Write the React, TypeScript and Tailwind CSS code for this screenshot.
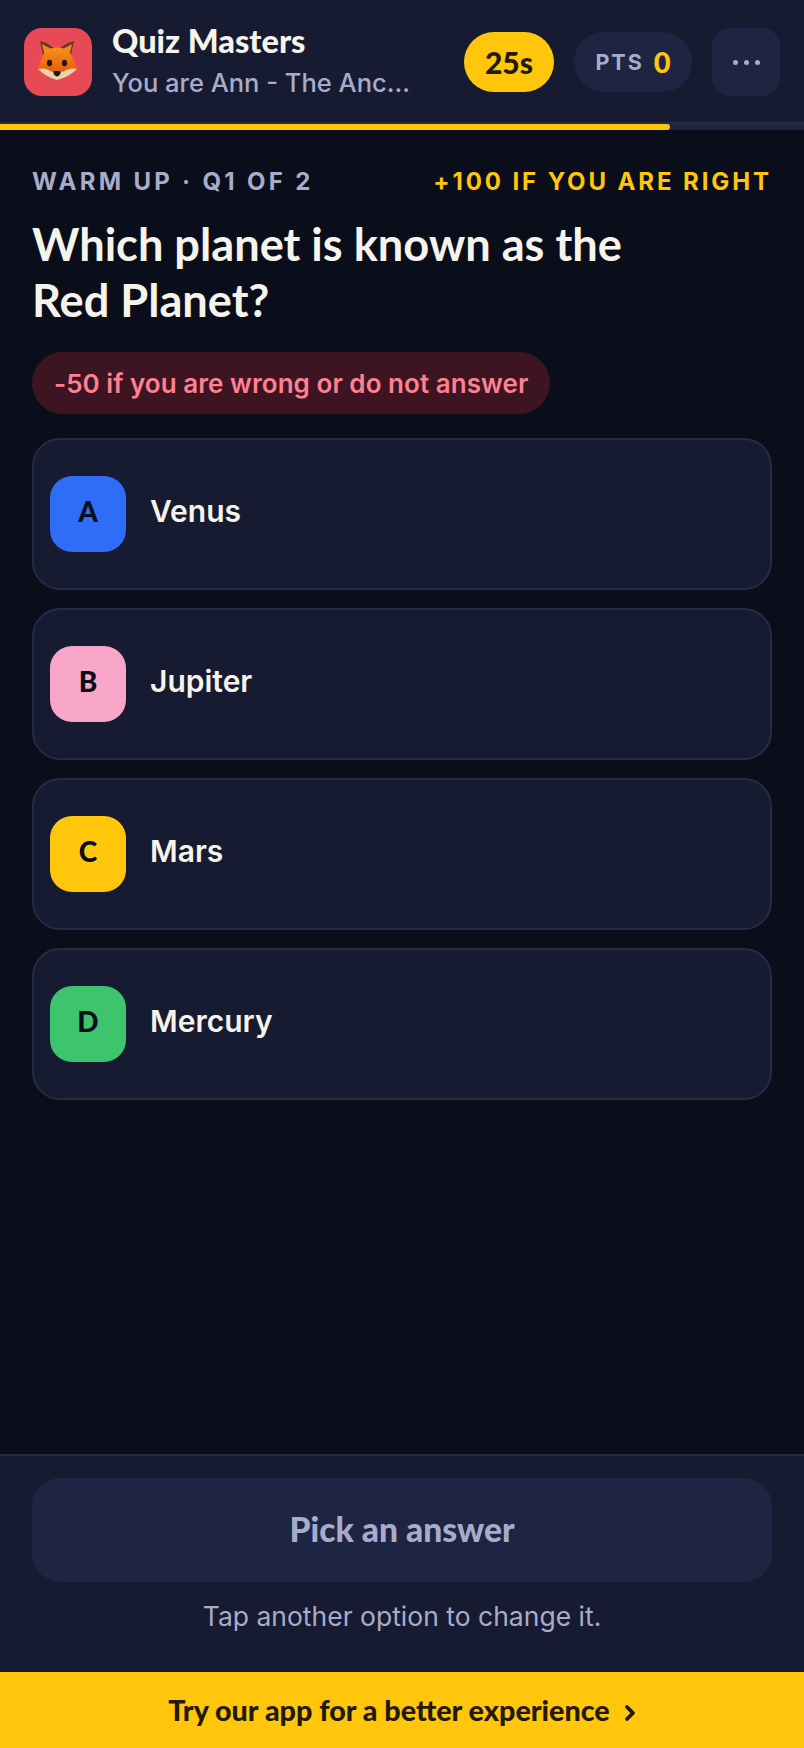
import React from 'react';

const head = { fontFamily: 'Lato, "Noto Sans", sans-serif' };

const options = [
  { letter: 'A', label: 'Venus', color: 'bg-[#2f6df6]' },
  { letter: 'B', label: 'Jupiter', color: 'bg-[#f7a6c8]' },
  { letter: 'C', label: 'Mars', color: 'bg-[#ffc60b]' },
  { letter: 'D', label: 'Mercury', color: 'bg-[#3ec46d]' },
];

const Fox = () => (
  <svg viewBox="0 0 68 68" className="w-[68px] h-[68px]">
    <defs>
      <linearGradient id="fur" x1="0" y1="0" x2="0" y2="1">
        <stop offset="0%" stopColor="#f5901c" />
        <stop offset="60%" stopColor="#ea6a0c" />
        <stop offset="100%" stopColor="#d24f08" />
      </linearGradient>
    </defs>
    <path d="M16 13 L20 31 L31 21 Q24 15 16 13 Z" fill="#5e3a20" />
    <path d="M50 13 L46 31 L35 21 Q42 15 50 13 Z" fill="#5e3a20" />
    <path d="M18 16 L21 29 L29 22 Z" fill="#ef8a1a" />
    <path d="M48 16 L45 29 L37 22 Z" fill="#ef8a1a" />
    <path d="M22 22 Q33 17 44 22 Q50 30 53 41 Q44 50 33 51 Q22 50 14 41 Q17 30 22 22 Z" fill="url(#fur)" />
    <path d="M14 41 Q22 39 28 44 Q33 41 39 44 Q45 39 53 41 Q45 49 33 52 Q22 49 14 41 Z" fill="#e9d3ad" />
    <ellipse cx="25.5" cy="35" rx="2.6" ry="3.2" fill="#231510" />
    <ellipse cx="40.5" cy="35" rx="2.6" ry="3.2" fill="#231510" />
    <path d="M29 43.5 Q33 42 37 43.5 Q36 48 33 48.5 Q30 48 29 43.5 Z" fill="#231510" />
  </svg>
);

export default function App() {
  return (
    <div className="h-[1748px] w-[804px] flex flex-col bg-[#0a0d1a] text-[#f6f3ea]" style={{ fontFamily: 'Inter, sans-serif' }}>
      {/* Top bar */}
      <header className="h-[122px] bg-[#161b31] flex items-center pl-6 pr-6 pt-[2px]">
        <div className="w-[68px] h-[68px] rounded-[18px] bg-[#e84a55] overflow-hidden shrink-0">
          <Fox />
        </div>
        <div className="ml-5 w-[300px] min-w-0">
          <div className="text-[32.5px] leading-[38px] font-black -mt-[2px]" style={head}>Quiz Masters</div>
          <div className="mt-[6px] text-[25.5px] leading-[34px] font-medium text-[#a8acca] truncate">You are Ann - The Anc...</div>
        </div>
        <div className="ml-auto flex items-center">
          <div className="w-[90px] h-[60px] rounded-full bg-[#ffc60b] text-[#241a02] flex items-center justify-center text-[30px] font-black" style={head}>25s</div>
          <div className="ml-5 w-[118px] h-[60px] rounded-full bg-[#1d2542] flex items-center justify-center gap-[10px]">
            <span className="text-[21.5px] font-bold tracking-[2px] text-[#a8acca]">PTS</span>
            <span className="text-[29px] font-black text-[#ffc60b]" style={head}>0</span>
          </div>
          <button className="ml-5 w-[68px] h-[68px] rounded-[18px] bg-[#1d2542] flex items-center justify-center gap-[6px]">
            <span className="w-[5px] h-[5px] rounded-full bg-[#a8acca]" />
            <span className="w-[5px] h-[5px] rounded-full bg-[#a8acca]" />
            <span className="w-[5px] h-[5px] rounded-full bg-[#a8acca]" />
          </button>
        </div>
      </header>

      {/* Progress */}
      <div className="h-2 bg-[#1d2542] border-t-2 border-[#262b45]">
        <div className="h-[6px] w-[670px] bg-[#ffc60b] rounded-r-full" />
      </div>

      {/* Question */}
      <main className="flex-1 px-8 pt-[37px]">
        <div className="flex items-center justify-between text-[24px] leading-[30px] font-bold">
          <span className="text-[#a8acca] tracking-[3.3px]">WARM UP · Q1 OF 2</span>
          <span className="text-[#ffc60b] tracking-[2.9px]">+100 IF YOU ARE RIGHT</span>
        </div>
        <h1 className="mt-[19px] text-[45.2px] leading-[56px] font-bold max-w-[640px]" style={head}>Which planet is known as the Red Planet?</h1>
        <div className="mt-[24px] inline-flex h-[62px] items-center rounded-full bg-[#3d1522] px-[22px] text-[26px] tracking-[0.05px] font-semibold text-[#ff8090]">-50 if you are wrong or do not answer</div>
        <div className="mt-6 flex flex-col gap-[18px]">
          {options.map((o) => (
            <div key={o.letter} className="h-[152px] rounded-[28px] border-2 border-[#262b45] bg-[#161b31] flex items-center px-4">
              <div className={`w-[76px] h-[76px] rounded-[22px] ${o.color} flex items-center justify-center pb-[6px] text-[28px] font-black text-[#0a0d1a]`} style={head}>{o.letter}</div>
              <div className="ml-6 text-[30px] font-semibold -mt-[6px]">{o.label}</div>
            </div>
          ))}
        </div>
      </main>

      {/* Footer */}
      <footer className="h-[218px] bg-[#161b31] border-t-2 border-[#262b45] px-8 pt-[22px]">
        <button className="w-full h-[104px] rounded-[28px] bg-[#1d2542] pb-[2px] text-[33.6px] font-black text-[#a8acca]" style={head}>Pick an answer</button>
        <p className="mt-[16px] text-center text-[26.5px] leading-[36px] text-[#a8acca]">Tap another option to change it.</p>
      </footer>

      {/* App banner */}
      <div className="h-[76px] pt-[2px] bg-[#ffc60b] text-[#241a02] flex items-center justify-center gap-[14px] text-[28.7px] font-black" style={head}>
        Try our app for a better experience
        <svg viewBox="0 0 12 18" className="w-3 h-[18px] mt-1" fill="none" stroke="currentColor" strokeWidth="3.8" strokeLinecap="round" strokeLinejoin="round"><path d="M3 3 L9 9 L3 15" /></svg>
      </div>
    </div>
  );
}
